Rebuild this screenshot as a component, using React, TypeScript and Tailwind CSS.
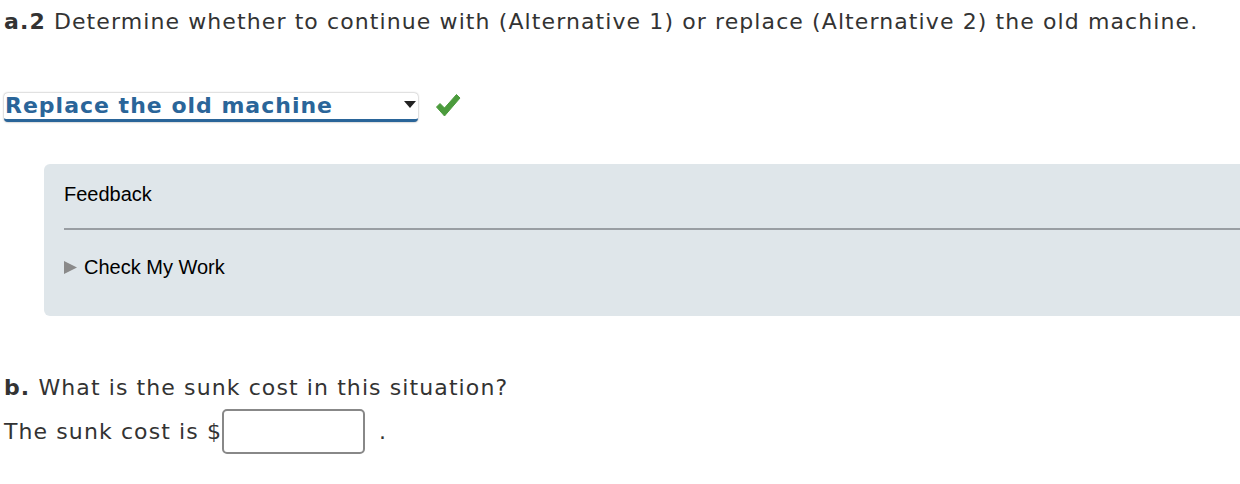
export default function App() {
  const verdana = { fontFamily: '"DejaVu Sans", Verdana, sans-serif' };
  return (
    <div className="w-[1240px] h-[484px] overflow-hidden bg-white text-[#333]" style={verdana}>
      <div className="pl-[4px] pt-[8px]">
        <p className="text-[22px] leading-[28px] tracking-[1.1px] text-[#333]">
          <b className="font-bold">a.2</b> Determine whether to continue with (Alternative 1) or replace (Alternative 2) the old machine.
        </p>

        <div className="mt-[57px] flex items-center">
          <div className="relative flex h-[29px] w-[414px] items-center rounded-[4px] border-b-[3px] border-[#2a6599] bg-white shadow-[0_0_2px_rgba(0,0,0,0.45)]">
            <span className="pl-[1px] text-[22px] font-bold leading-none tracking-[1px] text-[#2a6599]">Replace the old machine</span>
            <svg className="absolute right-[2px] top-[8px]" width="12" height="8" viewBox="0 0 12 8">
              <path d="M0 0 H12 L6 7 Z" fill="#222" />
            </svg>
          </div>
          <svg className="ml-[17px] -mt-[5px]" width="26" height="25" viewBox="0 0 26 25">
            <path d="M1.5 14 L5 10.5 L9.5 15 L21.5 1.5 L25 5 L9.5 23 Z" fill="#4b9b3c" strokeLinejoin="round" stroke="#4b9b3c" strokeWidth="1" />
          </svg>
        </div>
      </div>

      <div className="ml-[44px] mt-[42px] h-[152px] rounded-l-[6px] bg-[#dfe6ea] pl-[20px]" style={{ fontFamily: '"Liberation Sans", Arial, sans-serif' }}>
        <div className="pt-[19px] text-[20px] leading-[22px] text-black">Feedback</div>
        <div className="mt-[23px] h-[2px] bg-[#999ea3]" />
        <div className="mt-[26px] flex items-center text-[20px] leading-[22px] text-black">
          <svg width="13" height="13" viewBox="0 0 13 13" className="mr-[7px]">
            <path d="M0 0 L13 6.5 L0 13 Z" fill="#8a8a8a" />
          </svg>
          Check My Work
        </div>
      </div>

      <div className="pl-[4px] pt-[58px]">
        <p className="text-[22px] leading-[28px] tracking-[1.1px]">
          <b className="font-bold">b.</b> What is the sunk cost in this situation?
        </p>
        <div className="mt-[7px] flex items-center text-[22px] leading-[28px] tracking-[1.1px]">
          <span>The sunk cost is $</span>
          <div className="h-[45px] w-[143px] rounded-[5px] border-2 border-[#888] bg-white" />
          <span className="ml-[14px]">.</span>
        </div>
      </div>
    </div>
  );
}
